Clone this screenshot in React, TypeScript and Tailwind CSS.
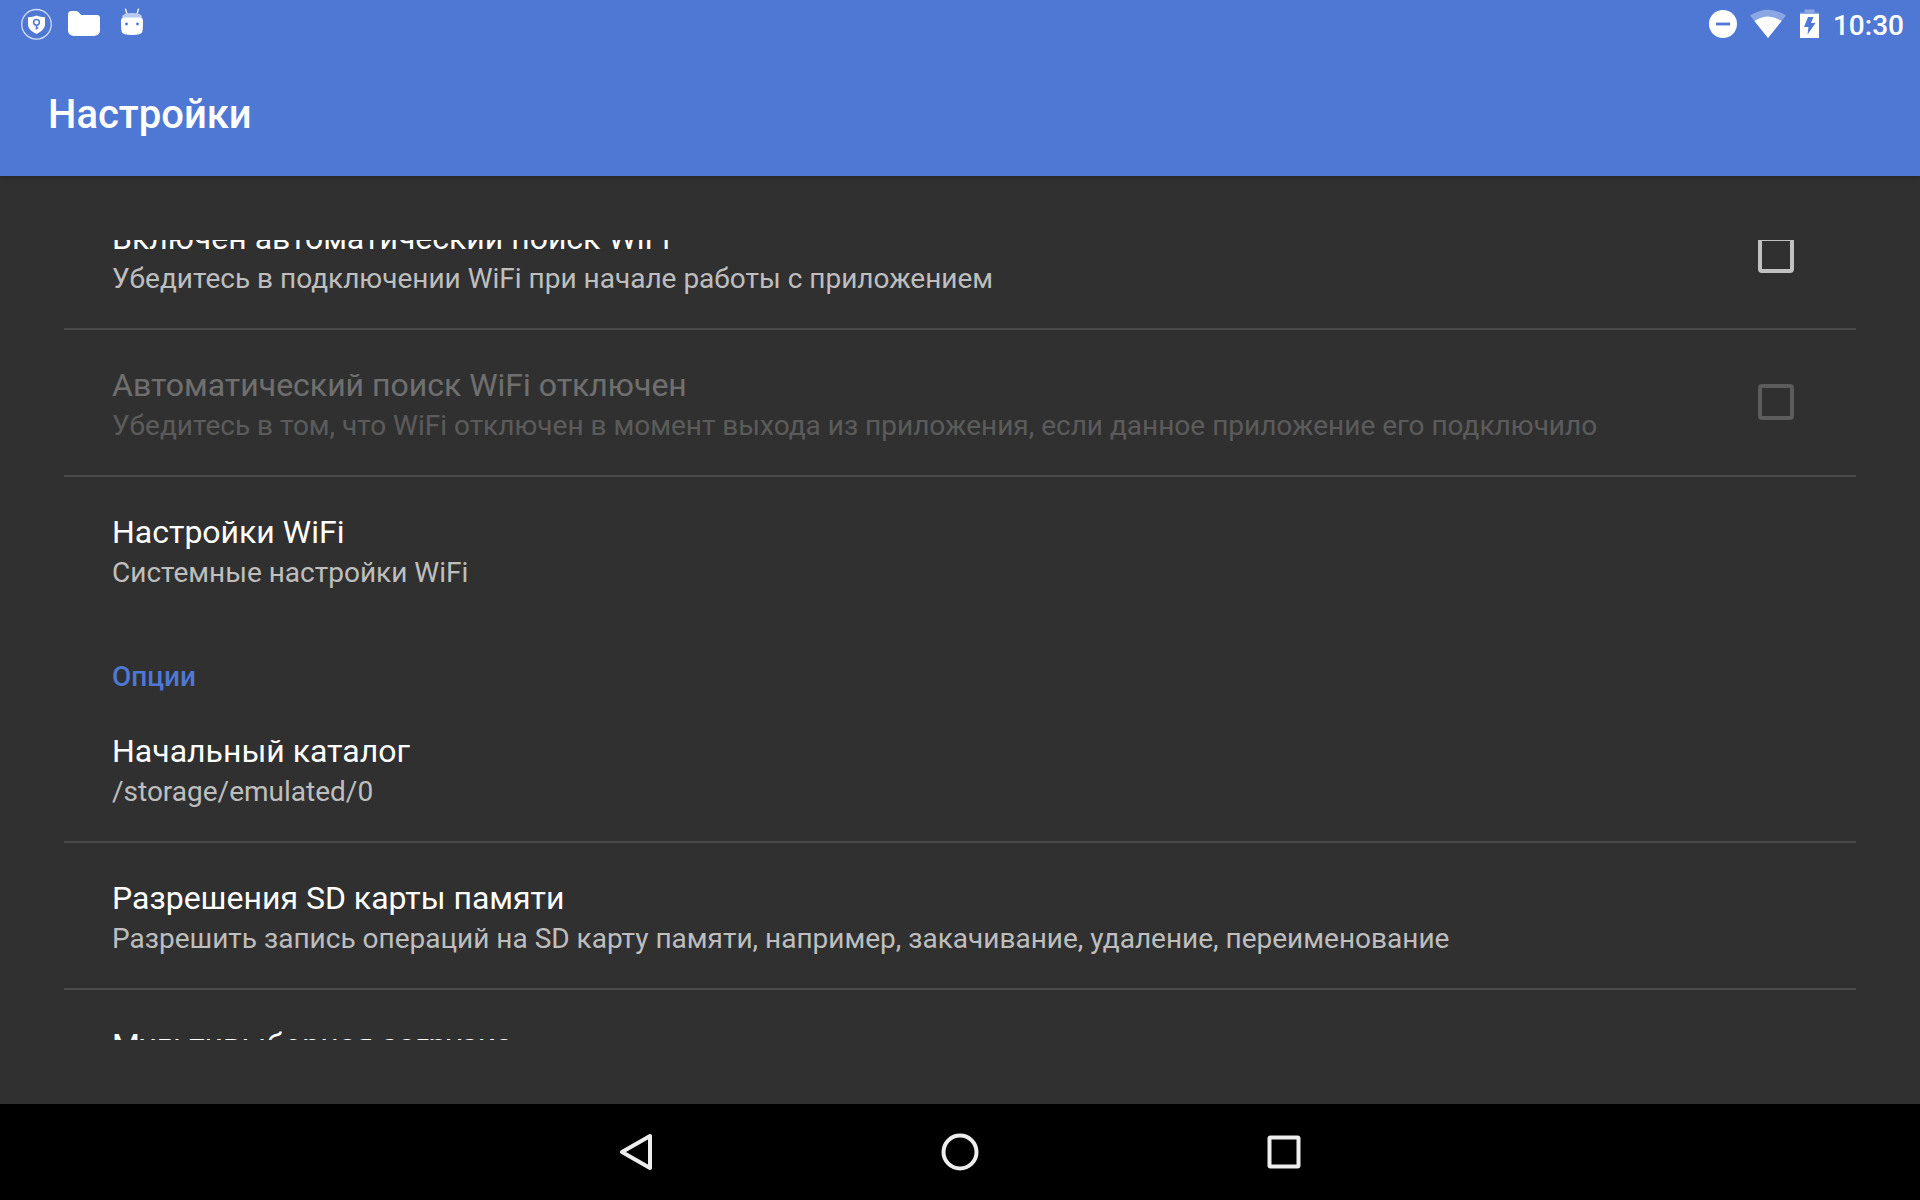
import React from "react";

type Setting = {
  id: string;
  title: string;
  summary: string;
  checkbox?: boolean;
  disabled?: boolean;
};

const wifi: Setting[] = [
  {
    id: "wifi-auto-on",
    title: "Включен автоматический поиск WiFi",
    summary: "Убедитесь в подключении WiFi при начале работы с приложением",
    checkbox: true,
  },
  {
    id: "wifi-auto-off",
    title: "Автоматический поиск WiFi отключен",
    summary:
      "Убедитесь в том, что WiFi отключен в момент выхода из приложения, если данное приложение его подключило",
    checkbox: true,
    disabled: true,
  },
  { id: "wifi-settings", title: "Настройки WiFi", summary: "Системные настройки WiFi" },
];

const options: Setting[] = [
  { id: "home-dir", title: "Начальный каталог", summary: "/storage/emulated/0" },
  {
    id: "sd-perm",
    title: "Разрешения SD карты памяти",
    summary: "Разрешить запись операций на SD карту памяти, например, закачивание, удаление, переименование",
  },
  { id: "multi", title: "Мультивыборная загрузка", summary: "" },
];

function StatusBar() {
  return (
    <div className="flex h-12 items-center justify-between pl-5 pr-4">
      <div className="flex items-center gap-3">
        <svg className="h-12 w-8" viewBox="0 0 32 48" aria-hidden="true">
          <circle cx="16.500" cy="24.300" r="14.800" fill="none" stroke="#d3defa" strokeWidth="1.300" />
          <path d="M16.500 15.500c2.500 1.300 5.500 1.700 8.500 1.700v7.300c0 4-3.500 7-8.500 9.500-5-2.500-8.500-5.500-8.500-9.500v-7.300c3 0 6-.4 8.500-1.700z" fill="#fff" />
          <circle cx="16.500" cy="22.300" r="2.900" fill="none" stroke="#4e78d4" strokeWidth="1.500" />
          <path d="M16.500 25v4.500M16.500 28h1.800" stroke="#4e78d4" strokeWidth="1.500" />
        </svg>
        <svg className="h-12 w-10" viewBox="0 0 40 48" aria-hidden="true">
          <path d="M4 14.500Q4 11 7.500 11H12c1.500 0 2.500.8 3.500 2.200 1 1.300 2 1.800 3.500 1.800h14q3 0 3 3v12c0 4.500-3 6-8 6H12c-5 0-8-1.500-8-6z" fill="#fff" />
        </svg>
        <svg className="h-12 w-10" viewBox="0 0 40 48" aria-hidden="true">
          <path d="M9.500 9l1.500 5M22.500 9l-1.500 5" stroke="#fff" strokeWidth="1.200" strokeLinecap="round" />
          <path d="M6 16q2-3 10-3t10 3l-1 3H7z" fill="#b9caf1" />
          <path d="M5 21q0-3.500 3-3.500h16q3 0 3 3.500v3q0 5-.8 8-.7 3-10.200 3t-10.200-3Q5 29 5 24z" fill="#fff" />
          <circle cx="10.500" cy="24" r="1.400" fill="#4e78d4" />
          <circle cx="21.500" cy="24" r="1.400" fill="#4e78d4" />
        </svg>
      </div>
      <div className="flex items-center gap-2">
        <svg className="h-12 w-32" viewBox="0 0 128 48" aria-hidden="true">
          <circle cx="26" cy="24" r="14" fill="#fff" />
          <path d="M19 24h14" stroke="#4e78d4" strokeWidth="2.800" />
          <path d="M53 15.500Q71 4 89 15.500L71 38z" fill="#fff" fillOpacity="0.350" />
          <path d="M57.500 21Q71 12 84.500 21L71 38z" fill="#fff" />
          <path d="M103 14V12.500h4.500V9.500h10v3h4.500V14z" fill="#fff" fillOpacity="0.350" />
          <path fillRule="evenodd" d="M103 14h19v24h-19zM111 17l-4 10h4.500l-1 7.500 8-11.500h-4.500l2.500-6z" fill="#fff" />
        </svg>
        <time className="pt-1 text-[28px] font-medium leading-8 text-white">10:30</time>
      </div>
    </div>
  );
}

function SettingRow({ item }: { item: Setting }) {
  const text = (
    <span className={item.disabled ? "block opacity-30" : "block"}>
      <span className="block text-[32px] leading-[46px] text-white">{item.title}</span>
      <span className="block min-h-[35px] text-[28px] leading-[35px] text-white/70">{item.summary}</span>
    </span>
  );
  if (!item.checkbox) {
    return (
      <button type="button" className="block w-full px-12 py-8 text-left">
        {text}
      </button>
    );
  }
  return (
    <label htmlFor={item.id} className="flex items-center justify-between px-12 py-8">
      {text}
      <input
        id={item.id}
        type="checkbox"
        disabled={item.disabled}
        className="mb-0.5 mr-[14px] size-9 shrink-0 appearance-none rounded border-4 border-[#c1c1c1] checked:bg-[#c1c1c1] disabled:border-[#5c5c5c]"
      />
    </label>
  );
}

function SettingList({ items }: { items: Setting[] }) {
  return (
    <ul className="divide-y-2 divide-[#4a4a4a]">
      {items.map((item) => (
        <li key={item.id}>
          <SettingRow item={item} />
        </li>
      ))}
    </ul>
  );
}

export default function App() {
  return (
    <div className="flex h-screen flex-col overflow-hidden bg-[#303030] font-['Roboto',sans-serif]">
      <header className="h-44 shrink-0 bg-[#4e78d4] shadow-[0_1px_6px_rgba(0,0,0,0.3)]">
        <StatusBar />
        <div className="flex h-32 items-center px-12 pt-1.5">
          <h1 className="text-[40px] font-medium leading-12 text-white">Настройки</h1>
        </div>
      </header>
      <main className="min-h-0 flex-1 p-16">
        <div className="h-full overflow-hidden">
          <div className="-mt-[57px]">
            <SettingList items={wifi} />
            <h2 className="px-12 pb-0.5 pt-[38px] text-[28px] font-medium leading-[34px] text-[#4e78d4]">Опции</h2>
            <SettingList items={options} />
          </div>
        </div>
      </main>
      <nav className="flex h-24 shrink-0 items-center justify-center bg-black">
        <button type="button" aria-label="Назад" className="flex w-[324px] justify-center">
          <svg className="size-12" viewBox="0 0 48 48" fill="none" stroke="#eee" strokeWidth="4" strokeLinejoin="round">
            <path d="M38 8v32L10 24z" />
          </svg>
        </button>
        <button type="button" aria-label="Домой" className="flex w-[324px] justify-center">
          <svg className="size-12" viewBox="0 0 48 48" fill="none" stroke="#eee" strokeWidth="4">
            <circle cx="24" cy="24" r="16.500" />
          </svg>
        </button>
        <button type="button" aria-label="Обзор" className="flex w-[324px] justify-center">
          <svg className="size-12" viewBox="0 0 48 48" fill="none" stroke="#eee" strokeWidth="4">
            <rect x="9.500" y="9.500" width="29" height="29" rx="1" />
          </svg>
        </button>
      </nav>
    </div>
  );
}
